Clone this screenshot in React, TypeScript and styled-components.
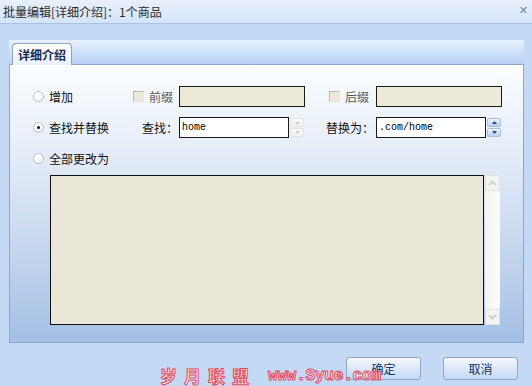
import React from "react";
import styled, { createGlobalStyle } from "styled-components";

const Global = createGlobalStyle`
  html, body { margin: 0; padding: 0; }
  body {
    width: 532px; height: 386px; overflow: hidden;
    background: #c4d9f4;
    font-family: "Noto Sans CJK SC", "DejaVu Sans", sans-serif;
    font-size: 12px; color: #111;
  }
`;

const Frame = styled.div`
  position: relative;
  width: 532px;
  height: 386px;
  display: flex;
  flex-direction: column;
`;

const TitleBar = styled.div`
  height: 24px;
  box-sizing: border-box;
  border-bottom: 1px solid #a9c3e6;
  background: linear-gradient(to bottom, #e8f1fc, #d3e4f8);
  display: flex;
  align-items: center;
  justify-content: space-between;
  padding: 0 4px 0 3px;
  color: #2b2b2b;
  font-size: 12px;
  line-height: 12px;
`;

const Close = styled.span`
  font-family: "DejaVu Sans", sans-serif;
  font-size: 11px;
  font-weight: bold;
  color: #71839c;
  margin-top: -2px;
`;

const Body = styled.div`
  padding: 16px 8px 0 9px;
`;

const TabStrip = styled.div`
  height: 24px;
  box-sizing: border-box;
  background: linear-gradient(to bottom, #e7f1fd, #b6d2f6);
  display: flex;
  align-items: flex-end;
  padding-left: 3px;
`;

const Tab = styled.div`
  height: 22px;
  width: 60px;
  box-sizing: border-box;
  border: 1px solid #8fa6c4;
  border-bottom: none;
  border-radius: 4px 4px 0 0;
  background: linear-gradient(to bottom, #ffffff, #e9f1fb);
  font-weight: bold;
  color: #13294d;
  display: flex;
  align-items: center;
  justify-content: center;
  font-size: 12px;
  margin-bottom: -1px;
  position: relative;
  z-index: 1;
`;

const Panel = styled.div`
  height: 279px;
  box-sizing: border-box;
  border: 1px solid #8ea7c9;
  background: linear-gradient(to bottom, #fbfdff 0%, #e2ebf7 35%, #bdd1ec 75%, #a3bfe4 100%);
  padding: 21px 0 0 23px;
`;

const Grid = styled.div`
  display: grid;
  grid-template-columns: 100px 46px 126px 21px 50px 126px;
  grid-auto-rows: 21px;
  row-gap: 10px;
  align-items: center;
`;

const Cell = styled.label<{ $right?: boolean; $pad?: number }>`
  display: flex;
  align-items: center;
  justify-content: ${(p) => (p.$right ? "flex-end" : "flex-start")};
  padding-left: ${(p) => p.$pad ?? 0}px;
  padding-right: ${(p) => (p.$right ? 1 : 0)}px;
  gap: 5px;
  white-space: nowrap;
`;

const Radio = styled.span<{ $on?: boolean }>`
  width: 11px;
  height: 11px;
  box-sizing: border-box;
  border-radius: 50%;
  border: 1px solid #b9c3cf;
  background: radial-gradient(circle at 40% 35%, #ffffff 40%, #dde3ea 100%);
  display: inline-flex;
  align-items: center;
  justify-content: center;
  flex: none;
  &::after {
    content: "";
    width: 3px;
    height: 3px;
    border-radius: 50%;
    background: ${(p) => (p.$on ? "#111" : "transparent")};
  }
`;

const Check = styled.span`
  width: 11px;
  height: 11px;
  box-sizing: border-box;
  border: 1px solid #bdbaa8;
  border-right-color: #e8e5d6;
  border-bottom-color: #e8e5d6;
  background: #ece9d8;
  flex: none;
`;

const Muted = styled.span`
  color: #5a5a5a;
`;

const Field = styled.div<{ $disabled?: boolean; $w: number }>`
  width: ${(p) => p.$w}px;
  height: 21px;
  box-sizing: border-box;
  border: 1px solid #1a1a1a;
  background: ${(p) => (p.$disabled ? "#ece9d8" : "#ffffff")};
  font-family: "Liberation Mono", "DejaVu Sans Mono", monospace;
  font-size: 10px;
  line-height: 19px;
  padding-left: 2px;
  color: #000;
`;

const SpinWrap = styled.div`
  display: flex;
  align-items: center;
  gap: 1px;
`;

const Spin = styled.div`
  display: flex;
  flex-direction: column;
  gap: 1px;
  width: 14px;
`;

const SpinBtn = styled.div<{ $active?: boolean }>`
  height: 9px;
  box-sizing: border-box;
  border: 1px solid ${(p) => (p.$active ? "#a9bfdd" : "#e0e3e6")};
  border-radius: 2px;
  background: ${(p) =>
    p.$active
      ? "linear-gradient(to bottom, #eef4fd, #b9d0f0)"
      : "linear-gradient(to bottom, #fafafa, #eef0f2)"};
  display: flex;
  align-items: center;
  justify-content: center;
`;

const Arrow = ({ up, color }: { up?: boolean; color: string }) => (
  <svg width="5" height="3" viewBox="0 0 5 3">
    <path d={up ? "M0 3 L2.5 0 L5 3 Z" : "M0 0 L2.5 3 L5 0 Z"} fill={color} />
  </svg>
);

const SpinBox = ({ active }: { active?: boolean }) => (
  <Spin>
    <SpinBtn $active={active}>
      <Arrow up color={active ? "#2a4a7c" : "#c9ccd0"} />
    </SpinBtn>
    <SpinBtn $active={active}>
      <Arrow color={active ? "#2a4a7c" : "#c9ccd0"} />
    </SpinBtn>
  </Spin>
);

const AreaRow = styled.div`
  display: flex;
  gap: 1px;
  margin: 6px 0 0 17px;
  height: 150px;
`;

const TextArea = styled.div`
  width: 434px;
  height: 150px;
  box-sizing: border-box;
  border: 1px solid #111;
  background: #ebe7d8;
`;

const Scroll = styled.div`
  width: 15px;
  height: 150px;
  background: linear-gradient(to right, #f4f4f0, #fcfcfb);
  display: flex;
  flex-direction: column;
  justify-content: space-between;
`;

const ScrollBtn = styled.div`
  height: 16px;
  box-sizing: border-box;
  border: 1px solid #e3e2dc;
  background: #f3f3ef;
  display: flex;
  align-items: center;
  justify-content: center;
`;

const Chevron = ({ up }: { up?: boolean }) => (
  <svg width="9" height="6" viewBox="0 0 9 6">
    <path
      d={up ? "M1 5 L4.5 1.5 L8 5" : "M1 1 L4.5 4.5 L8 1"}
      stroke="#c6cad0"
      strokeWidth="1.6"
      fill="none"
    />
  </svg>
);

const Footer = styled.div`
  display: flex;
  justify-content: flex-end;
  gap: 22px;
  padding: 14px 6px 0 0;
`;

const Button = styled.button`
  width: 75px;
  height: 23px;
  box-sizing: border-box;
  border: 1px solid #8ea6c6;
  border-radius: 3px;
  background: linear-gradient(to bottom, #f4f8fd 0%, #dde9f8 50%, #c2d8f4 100%);
  font-family: "Noto Sans CJK SC", sans-serif;
  font-size: 12px;
  color: #16325e;
  padding: 0;
  line-height: 21px;
`;

const Watermark = styled.div`
  position: absolute;
  left: 160px;
  top: 363px;
  display: flex;
  align-items: center;
  gap: 12px;
  color: #fff3f5;
  -webkit-text-stroke: 1px #e04a62;
  pointer-events: none;
`;

const WmCn = styled.span`
  font-family: "Noto Sans CJK SC", sans-serif;
  font-size: 17px;
  letter-spacing: 7px;
  font-weight: bold;
`;

const WmEn = styled.span`
  font-family: "Liberation Mono", monospace;
  font-size: 16px;
  font-weight: bold;
  letter-spacing: -0.2px;
`;

export default function App() {
  return (
    <Frame>
      <Global />
      <TitleBar>
        <span>批量编辑[详细介绍]：1个商品</span>
        <Close>✕</Close>
      </TitleBar>
      <Body>
        <TabStrip>
          <Tab>详细介绍</Tab>
        </TabStrip>
        <Panel>
          <Grid>
            <Cell>
              <Radio />
              增加
            </Cell>
            <Cell>
              <Check />
              <Muted>前缀</Muted>
            </Cell>
            <Field $disabled $w={126} />
            <span />
            <Cell $pad={3}>
              <Check />
              <Muted>后缀</Muted>
            </Cell>
            <Field $disabled $w={126} />

            <Cell>
              <Radio $on />
              查找并替换
            </Cell>
            <Cell $right>查找：</Cell>
            <SpinWrap>
              <Field $w={110}>home</Field>
              <SpinBox />
            </SpinWrap>
            <span />
            <Cell>替换为：</Cell>
            <SpinWrap>
              <Field $w={110}>.com/home</Field>
              <SpinBox active />
            </SpinWrap>

            <Cell>
              <Radio />
              全部更改为
            </Cell>
          </Grid>
          <AreaRow>
            <TextArea />
            <Scroll>
              <ScrollBtn>
                <Chevron up />
              </ScrollBtn>
              <ScrollBtn>
                <Chevron />
              </ScrollBtn>
            </Scroll>
          </AreaRow>
        </Panel>
        <Footer>
          <Button>确定</Button>
          <Button>取消</Button>
        </Footer>
      </Body>
      <Watermark>
        <WmCn>岁月联盟</WmCn>
        <WmEn>www.Syue.com</WmEn>
      </Watermark>
    </Frame>
  );
}
